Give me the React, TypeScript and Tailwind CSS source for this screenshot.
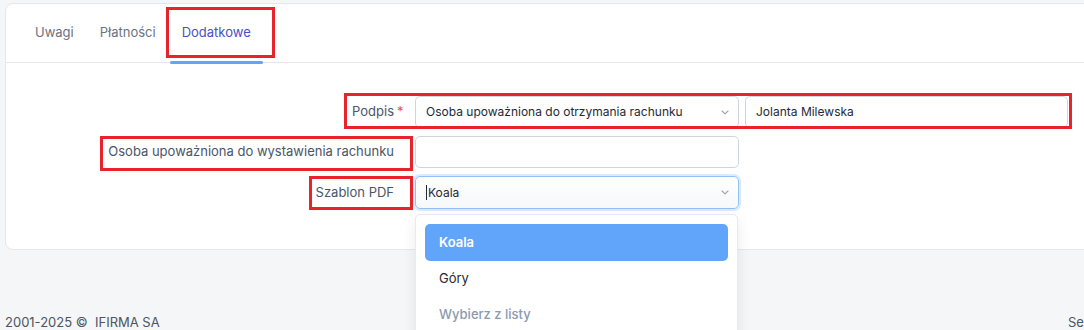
import React from "react";

function Chevron() {
  return (
    <svg width="8" height="5" viewBox="0 0 8 5" fill="none" className="shrink-0">
      <path d="M1 1 L4 3.8 L7 1" stroke="#9aa3b0" strokeWidth="1.1" strokeLinecap="round" strokeLinejoin="round" />
    </svg>
  );
}

export default function App() {
  return (
    <div
      className="relative w-[1084px] h-[330px] overflow-hidden bg-[#f5f6f8]"
      style={{ fontFamily: "Inter, 'Noto Sans', sans-serif" }}
    >
      <div className="ml-[5px] mt-[3px] w-[1100px] h-[247px] rounded-lg border border-[#e4e7ec] bg-white">
        {/* Tabs */}
        <div className="flex h-[59px] border-b border-[#e5e7eb] px-[16px]">
          <div className="flex items-center px-[13px] text-[13px] text-[#6b7280]">Uwagi</div>
          <div className="flex items-center px-[13px] text-[13px] text-[#6b7280]">Płatności</div>
          <div className="relative flex items-center px-[13px] text-[13px] text-[#4b4fc6]">
            Dodatkowe
            <div className="absolute left-[1px] right-[1px] bottom-[-2px] h-[3px] rounded-full bg-[#60a5fa]" />
          </div>
        </div>

        {/* Form */}
        <div className="flex flex-col gap-[8px] pt-[33px]">
          <div className="flex items-center">
            <div className="w-[409px] shrink-0 pr-[21px] text-right text-[13px] text-[#4a5568]">
              <span className="relative">
                Podpis
                <span className="absolute left-full top-[-1px] ml-[3px] text-[#ef5350]">*</span>
              </span>
            </div>
            <div className="flex h-[32px] w-[324px] items-center justify-between rounded-[5px] border border-[#cfd5dd] bg-white pl-[10px] pr-[9px] text-[12px] text-[#1f2937]">
              <span>Osoba upoważniona do otrzymania rachunku</span>
              <Chevron />
            </div>
            <div className="ml-[6px] flex h-[32px] w-[323px] items-center rounded-[5px] border border-[#cfd5dd] bg-white px-[10px] text-[12px] text-[#1f2937]">
              Jolanta Milewska
            </div>
          </div>

          <div className="flex items-center">
            <div className="w-[409px] shrink-0 whitespace-nowrap pr-[21px] text-right text-[13px] text-[#4a5568]">
              Osoba upoważniona do wystawienia rachunku
            </div>
            <div className="h-[32px] w-[324px] rounded-[5px] border border-[#cfd5dd] bg-white" />
          </div>

          <div className="flex items-center">
            <div className="w-[409px] shrink-0 pr-[21px] text-right text-[13px] text-[#4a5568]">Szablon PDF</div>
            <div className="relative w-[324px]">
              <div className="flex h-[33px] w-[324px] items-center justify-between rounded-[5px] border border-[#93c0f5] bg-gradient-to-b from-white to-[#f7f8fa] pl-[10px] pr-[9px] text-[12px] text-[#1f2937] shadow-[0_0_0_2px_rgba(147,197,253,0.35)]">
                <span className="flex items-center">
                  <span className="mr-[1px] inline-block h-[15px] w-[1px] bg-[#1f2937]" />
                  Koala
                </span>
                <Chevron />
              </div>
              <div className="absolute left-0 top-full mt-[5px] h-[130px] w-[323px] rounded-[5px] border border-[#e8eaef] bg-white p-[9px] shadow-[0_4px_14px_rgba(0,0,0,0.08)]">
                <div className="flex h-[37px] items-center rounded-[5px] bg-[#60a5fa] px-[14px] text-[13px] font-semibold text-white">
                  Koala
                </div>
                <div className="flex h-[36px] items-center px-[14px] text-[13px] text-[#1f2937]">Góry</div>
                <div className="flex h-[36px] items-center px-[14px] text-[13px] font-medium text-[#8a9ab0]">Wybierz z listy</div>
              </div>
            </div>
          </div>
        </div>
      </div>

      {/* Footer */}
      <div className="mt-[63px] flex pl-[5px] text-[13px] text-[#4b5563]">
        <div className="w-[1063px] shrink-0 whitespace-pre">2001-2025 ©  IFIRMA SA</div>
        <div className="shrink-0 whitespace-nowrap">Serwis</div>
      </div>

      {/* Red annotation boxes */}
      <div className="pointer-events-none absolute left-[166px] top-[7px] h-[51px] w-[109px] border-[3px] border-[#e8232b]" />
      <div className="pointer-events-none absolute left-[344px] top-[93px] h-[36px] w-[728px] border-[3px] border-[#e8232b]" />
      <div className="pointer-events-none absolute left-[100px] top-[136px] h-[35px] w-[313px] border-[3px] border-[#e8232b]" />
      <div className="pointer-events-none absolute left-[309px] top-[176px] h-[34px] w-[104px] border-[3px] border-[#e8232b]" />
    </div>
  );
}
